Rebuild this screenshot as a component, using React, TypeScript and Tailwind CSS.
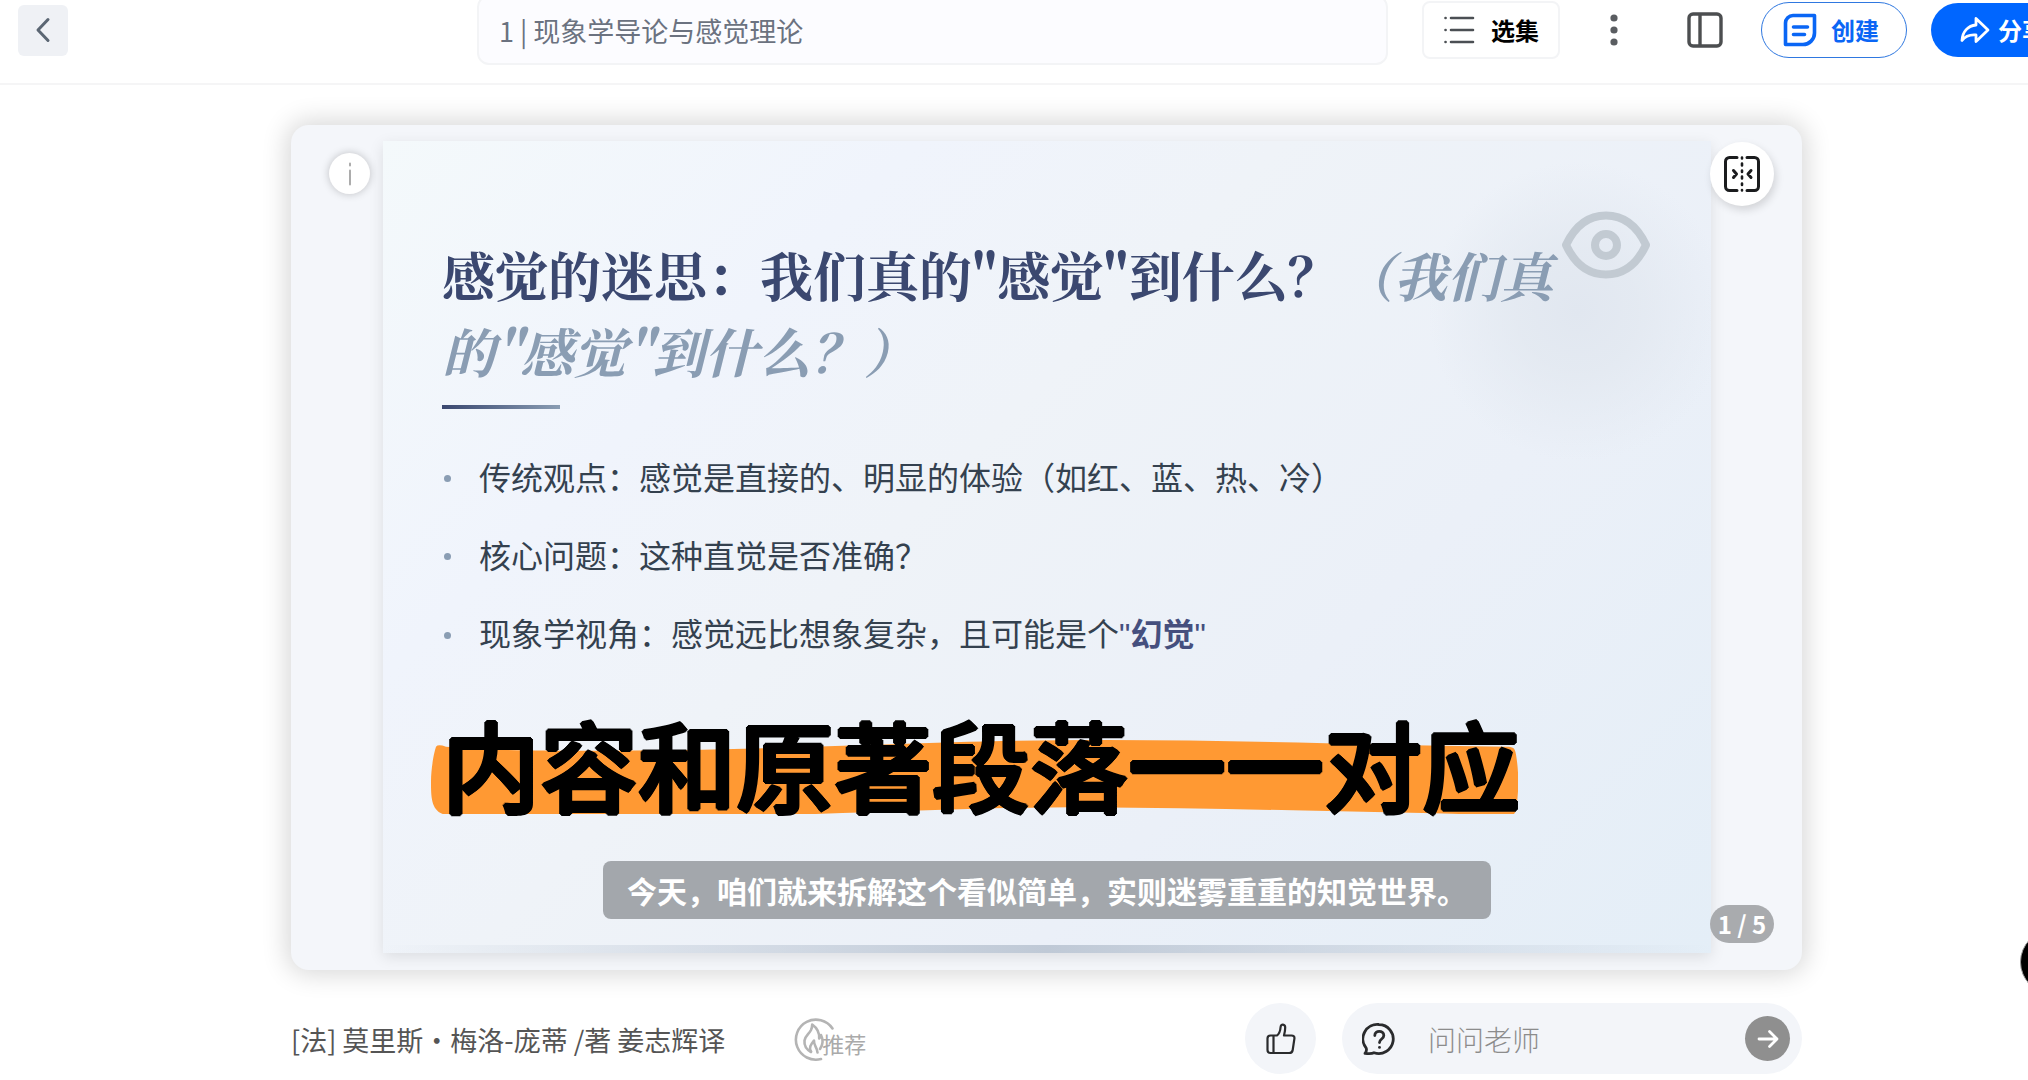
import { useState } from 'react';

const points = [
  { label: '传统观点', text: '感觉是直接的、明显的体验（如红、蓝、热、冷）' },
  { label: '核心问题', text: '这种直觉是否准确？' },
  { label: '现象学视角', text: '感觉远比想象复杂，且可能是个', quoted: '幻觉' },
];

function BackIcon() {
  return (
    <svg width="16" height="26" viewBox="0 0 16 26" fill="none" stroke="#5b6673" strokeWidth="3" strokeLinecap="round" strokeLinejoin="round">
      <path d="M13 2.500 3 13l10 10.500" />
    </svg>
  );
}

function ListIcon() {
  return (
    <svg width="32" height="30" viewBox="0 0 32 30" fill="none" stroke="#4b4f54" strokeWidth="2.600" strokeLinecap="round">
      <path d="M8 3h22M8 15h22M8 27h22M2.500 3h.1M2.500 15h.1M2.500 27h.1" />
    </svg>
  );
}

function MoreIcon() {
  return (
    <svg width="10" height="32" viewBox="0 0 10 32" fill="#5a5d61">
      <circle cx="5" cy="4" r="3.600" />
      <circle cx="5" cy="16" r="3.600" />
      <circle cx="5" cy="28" r="3.600" />
    </svg>
  );
}

function PanelIcon() {
  return (
    <svg width="36" height="36" viewBox="0 0 36 36" fill="none" stroke="#4c4e50" strokeWidth="3.400">
      <rect x="2" y="2" width="32" height="32" rx="4" />
      <path d="M13 2v32" />
    </svg>
  );
}

function NoteIcon() {
  return (
    <svg width="34" height="34" viewBox="0 0 34 34" fill="none" stroke="#0a66f5" strokeWidth="3.600" strokeLinecap="round" strokeLinejoin="round">
      <path d="M10 2.500h21.500V20a11.500 11.500 0 0 1-11.500 11.500H2.500V10A7.500 7.500 0 0 1 10 2.500z" />
      <path d="M10.500 14h14M10.500 21.500h11" />
    </svg>
  );
}

function ShareIcon() {
  return (
    <svg width="30" height="28" viewBox="0 0 30 28" fill="none" stroke="#fff" strokeWidth="2.800" strokeLinecap="round" strokeLinejoin="round">
      <path d="M16 2.500 28 14 16 25.500v-6.500C10 18.500 5 20.500 2 24.500 2.500 15.500 8 9.800 16 9z" />
    </svg>
  );
}

function CompareIcon() {
  return (
    <svg width="38" height="38" viewBox="0 0 38 38" fill="none" stroke="#1b1c1e" strokeWidth="3" strokeLinecap="round" strokeLinejoin="round">
      <path d="M14 2.500H6.500a4 4 0 0 0-4 4v25a4 4 0 0 0 4 4H14" />
      <path d="M24 2.500h7.500a4 4 0 0 1 4 4v25a4 4 0 0 1-4 4H24" />
      <path d="M19 2.500v1M19 8.500v2M19 15.500v1.500M19 21.500v2M19 28.500v1.500M19 35v.5" strokeWidth="2.600" />
      <path d="m10.500 15.500 3 3.500-3 3.500M28 15.500 25 19l3 3.500" />
    </svg>
  );
}

function EyeIcon() {
  return (
    <svg width="90" height="70" viewBox="0 0 90 70" fill="none" stroke="#c2cad2" strokeWidth="8" strokeLinejoin="round">
      <path d="M5 35C13 18 26 5.500 45 5.500S77 18 85 35C77 52 64 64.500 45 64.500S13 52 5 35z" />
      <circle cx="45" cy="35" r="11" />
    </svg>
  );
}

function FlameIcon() {
  return (
    <svg width="44" height="44" viewBox="0 0 44 44" fill="none" stroke="#b4b4b4" strokeWidth="2.600" strokeLinecap="round" strokeLinejoin="round">
      <path d="M38.500 11.500A20 20 0 1 0 27 42" />
      <path d="M17 35c-4.500-2.500-7-6.500-6.500-11.500.5-4.500 4.500-6.500 6.500-10.500.8-1.700 1.200-3.500 1.200-5.500 5 3.500 7.300 8 7 14 1-.8 1.500-2 1.800-3.500 2.500 5 2.500 9-1 14" />
      <path d="M17 34.500c-2.500-4 0-7 3-11-.5 5 3 6 3.500 12" />
    </svg>
  );
}

function ThumbIcon() {
  return (
    <svg width="30" height="32" viewBox="0 0 30 32" fill="none" stroke="#2a2b2d" strokeWidth="2.200" strokeLinejoin="round">
      <path d="M1.500 15.500A3 3 0 0 1 4.500 12.500H11c2.500-2 3.300-4.500 3.600-8.500.2-3.500 4.600-3 4.600.5 0 3-.4 5-1.200 8h7.500c2 0 3.200 1.200 2.900 3.200l-1.700 11.300c-.3 1.900-1.500 3-3.400 3H4.500a3 3 0 0 1-3-3z" />
      <path d="M7.500 12.500V30" />
    </svg>
  );
}

function QuestionIcon() {
  return (
    <svg width="34" height="34" viewBox="0 0 34 34" fill="none" stroke="#2a2b2d" strokeWidth="2.800" strokeLinecap="round" strokeLinejoin="round">
      <path d="M17 2.500a14.500 14.500 0 1 1-5 28.200c-1.500.8-5 1-9 .6 1.200-1.500 1.800-3.500 1.200-5.200A14.500 14.500 0 0 1 17 2.500z" />
      <path d="M12.800 13.500c0-5.500 9-5.500 9 0 0 3.500-4.300 3.500-4.300 7" />
      <path d="M17.500 25.300v.1" />
    </svg>
  );
}

function ArrowIcon() {
  return (
    <svg width="22" height="20" viewBox="0 0 22 20" fill="none" stroke="#fff" strokeWidth="2.800" strokeLinecap="round" strokeLinejoin="round">
      <path d="M2 10h18M12.500 2.500 20 10l-7.500 7.500" />
    </svg>
  );
}

function Header() {
  return (
    <header className="overflow-hidden border-b-2 border-[#f5f5f6] bg-white pb-[23px]">
      <div className="flex h-[60px] items-center pl-[18px]">
        <button aria-label="返回" className="flex h-[51px] w-[50px] shrink-0 items-center justify-center rounded-md bg-[#eff1f5]">
          <BackIcon />
        </button>
        <input
          aria-label="标题"
          defaultValue="1 | 现象学导论与感觉理论"
          className="ml-[409px] h-[70px] min-w-0 flex-1 rounded-xl border-2 border-[#f3f4f6] bg-[#fcfcff] px-5 text-[27px] text-[#6b7280] outline-none"
        />
        <button className="ml-[34px] flex h-[58px] shrink-0 items-center gap-4 rounded-lg border-2 border-[#f3f4f6] px-[19px] text-2xl font-bold text-black">
          <ListIcon />
          选集
        </button>
        <button aria-label="更多" className="ml-[49px] shrink-0">
          <MoreIcon />
        </button>
        <button aria-label="侧边栏" className="ml-[68px] shrink-0">
          <PanelIcon />
        </button>
        <button className="ml-[38px] flex h-[56px] w-[146px] shrink-0 items-center gap-[14px] rounded-full border border-[#2f78e0] pl-[21px] text-2xl font-bold text-[#0a66f5]">
          <NoteIcon />
          创建
        </button>
        <button className="-mr-[49px] ml-6 flex h-[54px] w-[146px] shrink-0 items-center gap-2 rounded-full bg-[#0066ff] pl-[29px] text-2xl font-bold text-white">
          <ShareIcon />
          分享
        </button>
      </div>
    </header>
  );
}

function Slide() {
  return (
    <section className="relative bg-[radial-gradient(circle_at_90%_21%,#e1e7f0_0,#e2e8f0cc_60px,transparent_150px),linear-gradient(135deg,#f4f9fb_0%,#f0f4fc_25%,#eff3f8_42%,#ebf0f8_68%,#e4eef7_100%)] pb-[34px] pl-[59px] pr-[59px] pt-[95px] shadow-[0_4px_14px_rgba(0,0,0,0.1)]">
      <h1 className="pr-[50px] font-['Noto_Serif_CJK_SC','Noto_Sans_CJK_SC',serif] text-[53px] font-bold leading-[76px] text-[#3b4870]">
        感觉的迷思：我们真的"感觉"到什么？
        <em className="text-[#8a9db3]">（我们真的"感觉"到什么？）</em>
      </h1>
      <div className="mt-[17px] h-1 w-[118px] bg-linear-to-r from-[#3b4870] to-[#8a9db3]" />

      <ul className="mt-[44px] space-y-8">
        {points.map((point) => (
          <li key={point.label} className="flex items-center gap-7 text-[32px] leading-[46px] text-[#34414f]">
            <span className="ml-[2px] mt-1 size-[7px] shrink-0 rounded-full bg-[#8a9db3]" />
            <span>
              {point.label}：{point.text}
              {point.quoted && (
                <span className="font-['Liberation_Sans','Noto_Sans_CJK_SC',sans-serif] text-[#454f7e]">
                  "<strong className="font-bold">{point.quoted}</strong>"
                </span>
              )}
            </span>
          </li>
        ))}
      </ul>

      {/* Marker stroke behind the headline */}
      <div className="relative mt-[54px] w-fit">
        <svg className="absolute -left-[11px] top-[28px] h-[74px] w-[1087px]" viewBox="0 0 1087 76" preserveAspectRatio="none">
          <path
            d="M5 8q2-3 10 0c30 3 80 4 140 4 220 0 330-11 520-11 130 0 250 5 400 7 7 0 9 1 10 8 3 18 3 38 0 57-1 4-3 6-9 5-150-3-280-7-420-8-160 0-280 11-500 11-50 0-90-1-140-3C0 76 0 60 0 44 0 30 3 14 5 8z"
            fill="#ff9933"
            transform="translate(0 -1)"
          />
        </svg>
        <h2 className="relative text-[98px] font-medium leading-[100px] text-black [text-shadow:2px_0_#000,-2px_0_#000,0_2px_#000,0_-2px_#000,1px_1px_#000,-1px_1px_#000,1px_-1px_#000,-1px_-1px_#000]">
          内容和原著段落一一对应
        </h2>
      </div>

      <p className="mx-auto mt-[49px] flex min-h-[58px] w-fit items-center rounded-lg bg-[#a3a7ac] px-6 text-[30px] font-bold text-white">
        今天，咱们就来拆解这个看似简单，实则迷雾重重的知觉世界。
      </p>

      <div className="absolute inset-x-0 bottom-0 h-2 bg-linear-to-r from-transparent via-[#bfc9d6] to-transparent" />
      <div className="absolute right-[60px] top-[69px]">
        <EyeIcon />
      </div>
    </section>
  );
}

export default function App() {
  const [question, setQuestion] = useState('');

  return (
    <div lang="zh-CN" className="relative min-h-screen overflow-hidden bg-white font-['Noto_Sans_CJK_SC',sans-serif]">
      <Header />

      <main className="pl-[291px] pr-[226px] pt-10">
        <div className="relative rounded-[18px] bg-[#f4f6fa] pb-[17px] pl-[92px] pr-[91px] pt-[16px] shadow-[0_0_26px_4px_rgba(0,0,0,0.16)]">
          <Slide />
          <button
            aria-label="信息"
            className="absolute left-[38px] top-[28px] flex size-[41px] items-center justify-center rounded-full bg-white shadow-[0_0_8px_rgba(0,0,0,0.22)]"
          >
            <svg width="4" height="24" viewBox="0 0 4 24" fill="none" stroke="#a3a3a3" strokeWidth="1.800" strokeLinecap="round">
              <path d="M2 1.500v2M2 8.500v14" />
            </svg>
          </button>
          <button
            aria-label="对比"
            className="absolute right-[28px] top-[17px] flex size-16 items-center justify-center rounded-full bg-white shadow-[2px_4px_8px_rgba(0,0,0,0.14)]"
          >
            <CompareIcon />
          </button>
          <span className="absolute bottom-[27px] right-[28px] flex h-[38px] w-16 items-center justify-center rounded-full bg-[#a9abae] text-2xl font-bold text-white">
            1 / 5
          </span>
        </div>

        <footer className="mt-[33px] flex items-center">
          <p className="pt-1 text-[27px] text-[#555]">[法] 莫里斯・梅洛-庞蒂 /著 姜志辉译</p>
          <div className="ml-[69px] flex items-center text-[#aaa]">
            <FlameIcon />
            <span className="-ml-4 pt-2 text-[22px] leading-8">推荐</span>
          </div>
          <button aria-label="点赞" className="ml-auto flex size-[71px] items-center justify-center rounded-full bg-[#f3f5f9]">
            <ThumbIcon />
          </button>
          <form
            className="ml-[26px] flex h-[71px] w-[460px] items-center rounded-full bg-[#f3f5f9] pl-5 pr-3"
            onSubmit={(e) => e.preventDefault()}
          >
            <QuestionIcon />
            <input
              aria-label="问问老师"
              placeholder="问问老师"
              value={question}
              onChange={(e) => setQuestion(e.target.value)}
              className="ml-8 min-w-0 flex-1 bg-transparent text-[28px] font-light text-[#333] outline-none placeholder:text-[#8c8c8c]"
            />
            <button aria-label="发送" className="flex size-[45px] shrink-0 items-center justify-center rounded-full bg-[#8f8f8f]">
              <ArrowIcon />
            </button>
          </form>
        </footer>
      </main>

      {/* Floating assistant button, mostly off the edge */}
      <button aria-label="助手" className="absolute -right-[56px] top-[930px] size-16 rounded-full border border-[#999] bg-black" />
    </div>
  );
}
